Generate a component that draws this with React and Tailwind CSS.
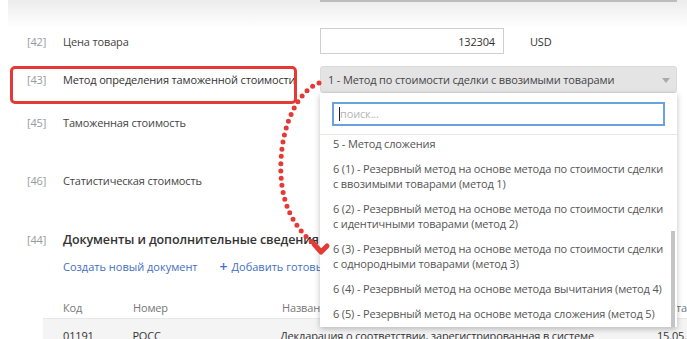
const items = [
  { text: '5 - Метод сложения' },
  { text: '6 (1) - Резервный метод на основе метода по стоимости сделки', sub: 'с ввозимыми товарами (метод 1)' },
  { text: '6 (2) - Резервный метод на основе метода по стоимости сделки', sub: 'с идентичными товарами (метод 2)' },
  { text: '6 (3) - Резервный метод на основе метода по стоимости сделки', sub: 'с однородными товарами (метод 3)' },
  { text: '6 (4) - Резервный метод на основе метода вычитания (метод 4)' },
  { text: '6 (5) - Резервный метод на основе метода сложения (метод 5)' },
];

function Num({ children }) {
  return <span className="w-[63px] shrink-0 pl-[27px] text-[#9a9a9a]">{children}</span>;
}

export default function App() {
  return (
    <div className="relative w-[687px] h-[339px] overflow-hidden bg-white text-[11px] tracking-[-0.15px] text-[#444] font-['Open_Sans',sans-serif]">
      {/* top edge of previous block */}
      <div className="h-[28px] ml-[8px] bg-gradient-to-b from-[#ececec] to-white">
        <div className="ml-[312px] w-[357px] h-[2px] border-b-2 border-[#bdbdbd] bg-[#f4f4f4]"></div>
      </div>

      {/* [42] */}
      <div className="flex items-center h-[26px]">
        <Num><span className="relative top-[1px]">[42]</span></Num>
        <span className="w-[257px] shrink-0 relative top-[1px]">Цена товара</span>
        <div className="w-[184px] h-[26px] border border-[#cfcfcf] flex items-center justify-end pr-[8px] pt-[2px] text-[#333]">132304</div>
        <span className="ml-[26px] pt-[2px] text-[#333]">USD</span>
      </div>

      {/* [43] */}
      <div className="flex items-center h-[27px] mt-[12px]">
        <Num><span className="relative top-[1px]">[43]</span></Num>
        <span className="w-[257px] shrink-0 text-[#333] whitespace-nowrap relative top-[1px]">Метод определения таможенной стоимости</span>
        <div className="w-[357px] h-[27px] rounded-[3px] bg-[#e4e4e4] border border-[#dadada] flex items-center justify-between pl-[7px] pr-[6px] pt-[2px]">
          <span className="text-[#444]">1 - Метод по стоимости сделки с ввозимыми товарами</span>
          <span className="w-0 h-0 border-x-[4px] border-x-transparent border-t-[5px] border-t-[#aaaaaa]"></span>
        </div>
      </div>

      {/* [45] */}
      <div className="flex items-center h-[20px] mt-[20px]">
        <Num>[45]</Num>
        <span>Таможенная стоимость</span>
      </div>

      {/* [46] */}
      <div className="flex items-center h-[20px] mt-[38px]">
        <Num>[46]</Num>
        <span>Статистическая стоимость</span>
      </div>

      {/* [44] */}
      <div className="flex items-center h-[20px] mt-[39px]">
        <Num>[44]</Num>
        <span className="text-[12.5px] tracking-[-0.1px] font-semibold text-[#333]">Документы и дополнительные сведения</span>
      </div>

      <div className="flex items-center h-[18px] mt-[8px] pl-[63px] tracking-normal text-[#3f6fc2]">
        <span>Создать новый документ</span>
        <span className="ml-[22px] text-[14px] leading-none font-semibold">+</span>
        <span className="ml-[4px]">Добавить готовый</span>
      </div>

      {/* table */}
      <div className="ml-[43px] mt-[22px]">
        <div className="flex items-center h-[20px] text-[#777] pl-[20px]">
          <span className="w-[70px]">Код</span>
          <span className="w-[149px]">Номер</span>
          <span className="w-[380px]">Название</span>
          <span className="ml-auto">Дата</span>
        </div>
        <div className="flex items-center h-[22px] bg-[#f4f4f4] border-t border-[#e8e8e8] text-[#333] pl-[20px] pt-[14px]">
          <span className="w-[70px]">01191</span>
          <span className="w-[149px]">РОСС</span>
          <span className="w-[380px] whitespace-nowrap">Декларация о соответствии, зарегистрированная в системе</span>
          <span className="ml-auto whitespace-nowrap">15.05.</span>
        </div>
      </div>

      {/* dropdown */}
      <div className="absolute left-[320px] top-[93px] w-[357px] h-[234px] bg-white shadow-[0_2px_6px_rgba(0,0,0,0.25)] flex flex-col">
        <div className="px-[12px] pt-[9px] pb-[8px] border-b border-[#e6e6e6]">
          <div className="h-[24px] border-2 border-[#6aa3dc] flex items-center px-[5px]">
            <span className="w-px h-[14px] bg-[#222]"></span>
            <span className="text-[#b5b5b5]">поиск...</span>
          </div>
        </div>
        <div className="relative flex-1 mt-[5px] overflow-hidden">
          <div className="-mt-[9px] pr-[12px]">
            {items.map((it, i) => (
              <div key={i} className="px-[13px] py-[5px] leading-[15px] text-[#555] whitespace-nowrap">
                <div>{it.text}</div>
                {it.sub && <div>{it.sub}</div>}
              </div>
            ))}
          </div>
          <div className="absolute right-[2px] top-[91px] bottom-0 w-[4px] bg-[#c4c4c4]"></div>
        </div>
      </div>

      {/* red highlight */}
      <div className="absolute left-[10px] top-[66px] w-[287px] h-[38px] border-[3px] border-[#e53935] rounded-[5px]"></div>

      {/* dotted arrow */}
      <svg className="absolute left-0 top-0" width="687" height="339" viewBox="0 0 687 339">
        <path d="M319 83 C 300 90, 283 120, 281 160 C 279 200, 292 225, 313 243" fill="none" stroke="#e53935" strokeWidth="5" strokeLinecap="round" strokeDasharray="0 7.2" />
        <path d="M314 244 L321 252 L327 246" fill="none" stroke="#e53935" strokeWidth="5" strokeLinecap="round" strokeLinejoin="round" />
      </svg>
    </div>
  );
}
